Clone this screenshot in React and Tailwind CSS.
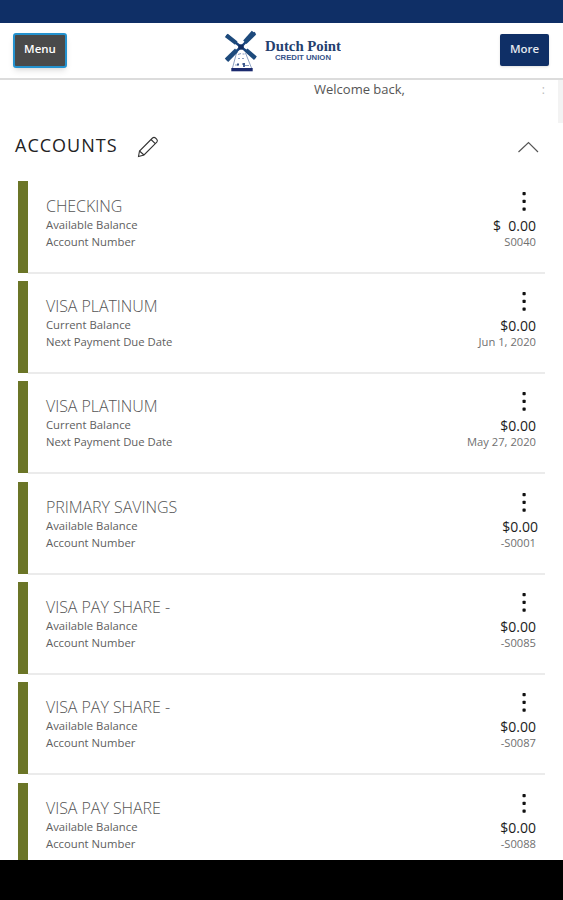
import React from "react";

const accounts = [
    { id: 1, name: "CHECKING", labels: ["Available Balance", "Account Number"], amount: "$\u00a0 0.00", detail: "S0040" },
    { id: 2, name: "VISA PLATINUM", labels: ["Current Balance", "Next Payment Due Date"], amount: "$0.00", detail: "Jun 1, 2020" },
    { id: 3, name: "VISA PLATINUM", labels: ["Current Balance", "Next Payment Due Date"], amount: "$0.00", detail: "May 27, 2020" },
    { id: 4, name: "PRIMARY SAVINGS", labels: ["Available Balance", "Account Number"], amount: "$0.00", detail: "-S0001", amountClass: "-mr-[2px]" },
    { id: 5, name: "VISA PAY SHARE -", labels: ["Available Balance", "Account Number"], amount: "$0.00", detail: "-S0085" },
    { id: 6, name: "VISA PAY SHARE -", labels: ["Available Balance", "Account Number"], amount: "$0.00", detail: "-S0087" },
    { id: 7, name: "VISA PAY SHARE", labels: ["Available Balance", "Account Number"], amount: "$0.00", detail: "-S0088" },
];

const Windmill = () => (
    <svg width="34" height="43" viewBox="0 0 34 43" fill="none">
        {/* Tower */}
        <path d="M12 22 L17 17 L22 22 L28 38 H8 Z" fill="#fff" />
        <path d="M12.5 23 L8.5 38 M21.5 23 L27.5 38" stroke="#8fa2c2" strokeWidth="1" />
        <path d="M14 24.5 l3 -1 M18.5 24 h2 M14 28.5 h2 M18 28.5 h2 M11 35 h3 M21 35.5 h4" stroke="#8a9dbf" strokeWidth="1.2" />
        <path d="M13 34.5 h2 M18.5 34 h2.5 M20 33 v4" stroke="#38568c" strokeWidth="1.8" />
        <path d="M7.3 38 H28.7 V41.3 H7.3 Z" fill="#1b2a6e" />
        {/* Sails */}
        <path d="M17 17 L2.5 5 M17 17 L31 2.5 M17 17 L2.5 30 M17 17 L31.5 28" stroke="#17427c" strokeWidth="2.4" />
        <path d="M0.8 7 L3.8 3.8 L13.5 11.5 L11 14.8 Z" fill="#1d4a7c" />
        <path d="M27.8 0.8 L32.2 4.5 L22.5 14 L19.2 10.5 Z" fill="#1d4a7c" />
        <path d="M0.8 28.5 L4.2 32 L14 22 L11 18.5 Z" fill="#1d4a7c" />
        <path d="M30 30 L32.8 26.5 L23.5 18.5 L20.5 21.5 Z" fill="#1d4a7c" />
        <circle cx="17" cy="17" r="2.8" fill="#102c60" />
    </svg>
);

const Logo = () => (
    <div className="flex items-start text-[#17356b]">
        <Windmill />
        <div className="ml-[7px] mt-[10px] flex w-[76px] flex-col items-center whitespace-nowrap">
            <svg width="76" height="14" viewBox="0 0 76 14">
                <text x="0" y="11" textLength="76" lengthAdjust="spacingAndGlyphs" fill="#24406f" className="font-['Liberation_Serif',serif] text-[14px] font-bold">
                    Dutch Point
                </text>
            </svg>
            <svg width="56" height="8" viewBox="0 0 56 8">
                <text x="0" y="5.5" textLength="56" lengthAdjust="spacingAndGlyphs" fill="#35528a" className="font-['Liberation_Sans',sans-serif] text-[7px] font-bold">
                    CREDIT UNION
                </text>
            </svg>
        </div>
    </div>
);

const Header = () => (
    <header className="grid h-[57px] grid-cols-3 items-start border-b-2 border-[#dcdcdc] bg-white pt-[9px] pr-[14px] pl-[13px]">
        <button className="mt-px h-[35px] w-[54px] rounded-[3px] border-2 border-[#2492cf] bg-[#4a4a4a] pb-[3px] text-[11.5px] font-semibold text-white shadow-md">
            Menu
        </button>
        <div className="-mt-[2px] ml-[4px] flex justify-center">
            <Logo />
        </div>
        <button className="mt-[2px] h-[32px] w-[49px] justify-self-end rounded-[2px] bg-[#0f2f66] pb-[3px] text-[11.5px] font-semibold text-[#e4e8ef] shadow">
            More
        </button>
    </header>
);

const Dots = () => (
    <svg width="4" height="20" viewBox="0 0 4 20" fill="#111">
        <rect x="0.5" y="0" width="3.2" height="3.2" rx="0.8" />
        <rect x="0.5" y="7.8" width="3.2" height="3.2" rx="0.8" />
        <rect x="0.5" y="15.6" width="3.2" height="3.2" rx="0.8" />
    </svg>
);

const AccountRow = ({ account }) => (
    <div className="mb-[7.37px] flex h-[93px] shrink-0">
        <div className="h-[92px] w-[10px] bg-[#6b7527]" />
        <div className="flex flex-1 justify-between border-b-2 border-[#ebebeb] pl-[18px]">
            <div className="pt-[15px] text-[11.3px] leading-[17px] text-[#606060]">
                <h3 className="text-[16px] leading-[20px] font-light tracking-[-0.05px] text-[#555]">{account.name}</h3>
                {account.labels.map((label) => (
                    <p key={label}>{label}</p>
                ))}
            </div>
            <div className="flex flex-col items-end pt-[11px] pr-[9px]">
                <div className="pr-[10px]">
                    <Dots />
                </div>
                <p className={`mt-[6px] text-[14px] leading-[16px] text-[#1c1c1c] ${account.amountClass || ""}`}>{account.amount}</p>
                <p className="text-[11.2px] leading-[15px] text-[#707070]">{account.detail}</p>
            </div>
        </div>
    </div>
);

const App = () => {
    return (
        <div className="flex h-[900px] w-[563px] flex-col overflow-hidden bg-white font-['Open_Sans',sans-serif]">
            <div className="h-[23px] shrink-0 bg-[#0f2f66]" />
            <Header />

            <main className="flex h-[780px] flex-col overflow-hidden">
                <div className="flex h-[43px] shrink-0 justify-between pl-[314px]">
                    <p className="text-[13px] leading-[18px] text-[#555]">Welcome back,</p>
                    <div className="flex">
                        <span className="mr-[13px] text-[12px] leading-[20px] text-[#bbb]">:</span>
                        <div className="w-[5px] bg-[#f3f3f3]" />
                    </div>
                </div>

                <div className="flex h-[57.5px] shrink-0 items-start pt-[9px] pr-[24px] pl-[15px]">
                    <h2 className="w-[103px] text-[18px] leading-[26px] tracking-[1px] whitespace-nowrap text-[#222]">ACCOUNTS</h2>
                    <svg className="mt-[4px] ml-[19px]" width="22" height="22" viewBox="0 0 22 22" fill="none" stroke="#333" strokeWidth="1.1">
                        <path d="M1.5 20.5 L2.5 15 L15.5 2 Q17 0.8 18.5 2 L19.8 3.3 Q21 4.8 19.8 6.2 L7 19 Z" />
                        <path d="M2.5 15 L7 19 M14 3.5 L18.3 7.7" />
                    </svg>
                    <svg className="mt-[9px] ml-auto" width="22" height="12" viewBox="0 0 22 12" fill="none" stroke="#555" strokeWidth="1.2">
                        <path d="M1.5 11 L11.5 1.5 L21 11" />
                    </svg>
                </div>

                <div className="flex flex-col pr-[18px] pl-[18px]">
                    {accounts.map((account) => (
                        <AccountRow key={account.id} account={account} />
                    ))}
                </div>
            </main>

            <div className="flex-1 bg-black" />
        </div>
    );
};

export default App;
